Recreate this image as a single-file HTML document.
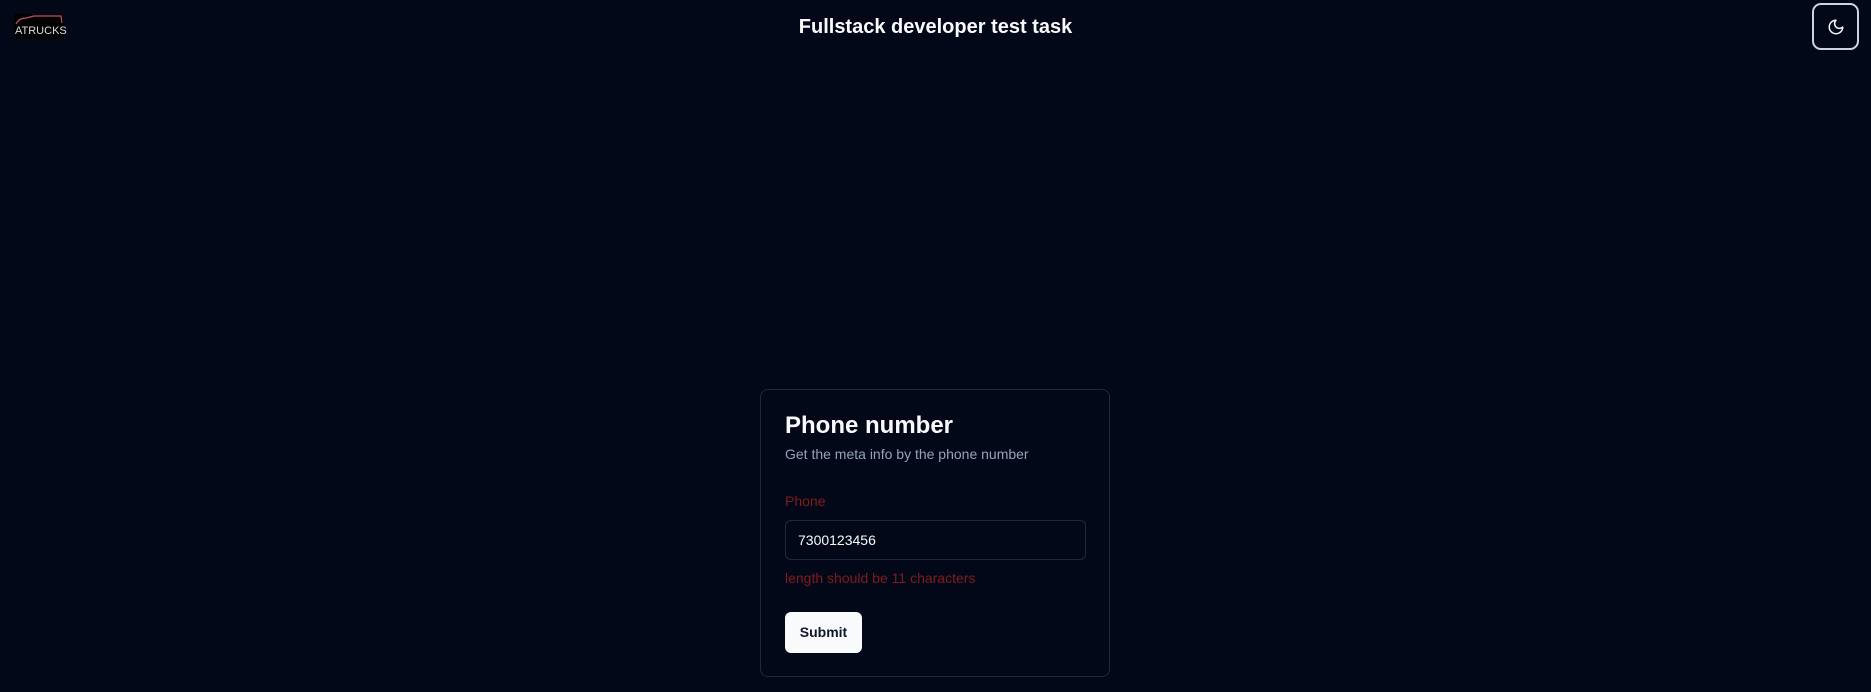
<!DOCTYPE html>
<html><head><meta charset="utf-8"><style>
*{box-sizing:border-box;margin:0;padding:0}
body{width:1871px;height:692px;background:#020817;font-family:"Liberation Sans",sans-serif;color:#f8fafc;position:relative;overflow:hidden}
.title{position:absolute;top:16px;left:0;width:1871px;text-align:center;font-weight:bold;font-size:20px}
.logo{position:absolute;left:14px;top:14px;width:50px;height:25px;background:#000}
.logo span{position:absolute;left:1px;top:11px;font-size:11px;letter-spacing:0px;color:#ddd}
.moon{position:absolute;left:1812px;top:3px;width:47px;height:47px;border:2px solid #cbd5e1;border-radius:9px;display:flex;align-items:center;justify-content:center}
.card{position:absolute;left:760px;top:389px;width:350px;height:288px;border:1px solid #1e293b;border-radius:8px}
.h{position:absolute;left:24px;top:22px;font-size:24px;font-weight:bold}
.sub{position:absolute;left:24px;top:56px;font-size:14px;color:#94a3b8}
.lab{position:absolute;left:24px;top:103px;font-size:14px;color:#7f1d1d}
.inp{position:absolute;left:24px;top:130px;width:301px;height:40px;border:1px solid #1e293b;border-radius:6px;font-size:14px;padding:11px 12px;color:#f8fafc}
.err{position:absolute;left:24px;top:180px;font-size:14px;color:#7f1d1d}
.btn{position:absolute;left:24px;top:222px;width:77px;height:41px;background:#f8fafc;border-radius:6px;color:#0f172a;font-size:14px;font-weight:bold;text-align:center;line-height:41px}
</style></head><body>
<div class="logo"><svg width="50" height="12" style="position:absolute;left:0;top:0"><path d="M2 10 Q5 4 12 4 L20 2 L47 2 L48 9" fill="none" stroke="#c0506a" stroke-width="1.2"/></svg><span>ATRUCKS</span></div>
<div class="title">Fullstack developer test task</div>
<div class="moon"><svg width="18" height="18" viewBox="0 0 24 24" fill="none" stroke="#f8fafc" stroke-width="2" stroke-linecap="round" stroke-linejoin="round"><path d="M12 3a6 6 0 0 0 9 9 9 9 0 1 1-9-9Z"/></svg></div>
<div class="card">
<div class="h">Phone number</div>
<div class="sub">Get the meta info by the phone number</div>
<div class="lab">Phone</div>
<div class="inp">7300123456</div>
<div class="err">length should be 11 characters</div>
<div class="btn">Submit</div>
</div>
</body></html>
